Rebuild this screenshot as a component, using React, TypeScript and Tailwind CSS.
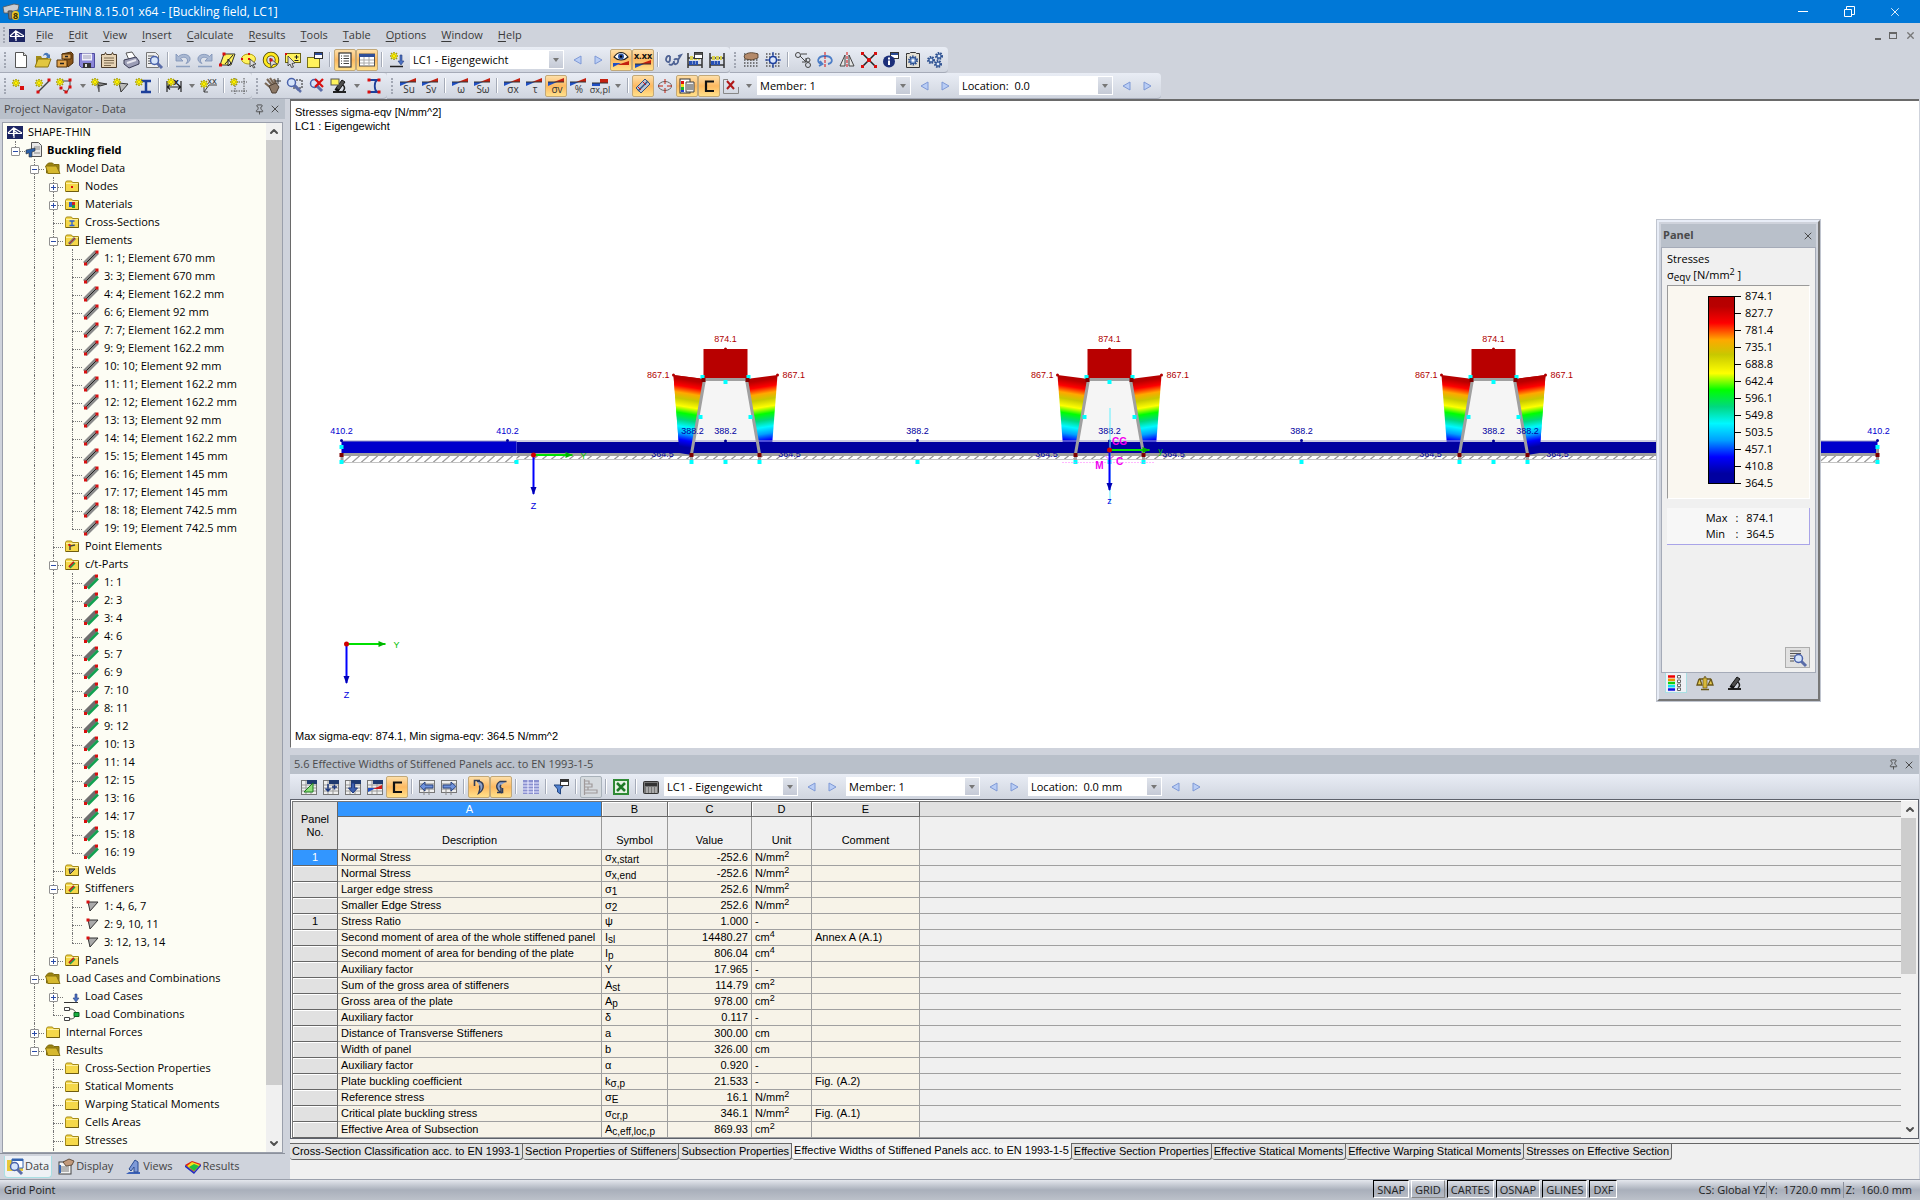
import React from "react";
import { ChevronDown, ChevronUp, Pin, X } from "lucide-react";

/* ---------- small drawing parts shared by the icons ---------- */

const Spark = ({ x = 0, y = 0 }: { x?: number; y?: number }) => (
  <g transform={`translate(${x} ${y})`}>
    <path d="M3 -1v8M-1 3h8M0 0l6 6M6 0l-6 6" stroke="#a8a000" strokeWidth="1.6" />
    <path d="M3 0v6M0 3h6M1 1l4 4M5 1l-4 4" stroke="#fff200" strokeWidth="1" />
  </g>
);

const Node = ({ x, y, s = 3 }: { x: number; y: number; s?: number }) => (
  <rect x={x - s / 2} y={y - s / 2} width={s} height={s} fill="#d90f0f" />
);

const Wedge = ({ label }: { label?: string }) => (
  <>
    <path d="M0 4h9L0 8z" fill="#1f4fc4" />
    <path d="M16 0v4H6z" fill="#c4200f" />
    <path d="M0 4h16" stroke="#333" />
    {label && (
      <text x="9" y="15" fontSize="10" textAnchor="middle" fill="#333">
        {label}
      </text>
    )}
  </>
);

const Sheet = ({ color = "#1f3a70" }: { color?: string }) => (
  <>
    <rect x=".5" y="1.5" width="15" height="14" fill="#eee" stroke="#777" />
    <path d="M1 6h14M1 9h14M1 12h14M5 2v13M10 2v13" stroke="#999" />
    <rect x="6" y="1" width="10" height="4" fill={color} />
  </>
);

const Lens = ({ x = 0, y = 0 }: { x?: number; y?: number }) => (
  <g transform={`translate(${x} ${y})`}>
    <path d="M8 8l5 5" stroke="#5b6da8" strokeWidth="3" />
    <circle cx="5.500" cy="5.500" r="4" fill="#d5e4fa" stroke="#4a62ab" strokeWidth="1.500" />
  </g>
);

const DotGrid = () => (
  <path
    d="M1 2h15M1 5h15M1 8h15M1 11h15M1 14h15"
    stroke="#555"
    strokeDasharray="1.500 1.500"
    strokeWidth="1.500"
  />
);

const Gear = ({ x, y, r }: { x: number; y: number; r: number }) => (
  <g>
    <circle cx={x} cy={y} r={r} fill="none" stroke="#2c4f8f" strokeWidth="2" strokeDasharray="1.500 1" />
    <circle cx={x} cy={y} r={r - 0.8} fill="#7f9fd0" stroke="#2c4f8f" />
    <circle cx={x} cy={y} r={r / 3} fill="#fff" />
  </g>
);

const Abacus = () => (
  <>
    <path d="M1 1v15M15 1v15M1 6h14M1 13h14" stroke="#333" strokeWidth="1.500" />
    <path d="M3 6h10" stroke="#d8cf50" strokeWidth="4" strokeDasharray="3 1" />
    <path d="M2 11h9" stroke="#2650b5" strokeWidth="4" strokeDasharray="3 .5" />
  </>
);

const FolderShape = ({ open = false }: { open?: boolean }) =>
  open ? (
    <>
      <path d="M1.500 13V5l2-2h4l1.500 1.500h5V13z" fill="#9c8410" stroke="#7d690d" />
      <path d="M.5 6h11l3.500 7.500H3z" fill="#d6b82e" stroke="#8a7414" />
    </>
  ) : (
    <>
      <path d="M1.500 13.500v-9l1-1.500h5l1 1.500h6v9z" fill="#f5d84a" stroke="#a58a1a" />
      <path d="M2 5.500h12" stroke="#fdf0a0" />
      <path d="M2 13.500h12.500v-8" stroke="#6f5c10" fill="none" />
    </>
  );

const Bridge = () => (
  <>
    <rect width="16" height="13" y="2" fill="#1c2563" />
    <path d="M1 9.500h14M7 4v10M1 9l5.500-5v8M7 4l8 5M7 6.500l4 3" stroke="#fff" strokeWidth="1.200" fill="none" />
  </>
);

const Section = () => (
  <path d="M13 3.500H5v9.500h8" fill="none" stroke="#111" strokeWidth="2.200" />
);

const Microscope = () => (
  <>
    <path d="M2 15h13v-2H2z" fill="#222" />
    <path d="M5 10l6-8 3 2-6 8z" fill="#4d4d4d" stroke="#111" />
    <path d="M12 7c2 2 2 4 0 6" stroke="#222" strokeWidth="1.500" fill="none" />
    <path d="M4 11l4 2" stroke="#111" strokeWidth="2" />
  </>
);

const Arrow = ({ flip = false }: { flip?: boolean }) => (
  <path
    d={flip ? "M12 4v8L5 8z" : "M4 4v8l7-4z"}
    fill="#b9cdf5"
    stroke="#7f99d6"
  />
);

const ICONS: Record<string, React.ReactNode> = {
  bridge: <Bridge />,
  app: (
    <>
      <path d="M0 3l11-3 5 1-1 5-4 1H6v2H1z" fill="#c9ccd2" stroke="#555" strokeWidth=".8" />
      <path d="M5 7h4v8H6z" fill="#70757f" stroke="#444" strokeWidth=".8" />
      <rect x="9" y="7" width="7" height="9" rx="3" fill="#e6c52c" />
      <text x="12.500" y="14.500" fontSize="9" fontWeight="bold" textAnchor="middle" fill="#3a3000">8</text>
    </>
  ),
  new: (
    <>
      <path d="M2.500 .5h8l3 3v12h-11z" fill="#fff" stroke="#555" />
      <path d="M10.500 .5v3h3" fill="#ddd" stroke="#555" />
    </>
  ),
  open: (
    <>
      <path d="M1 14V4h5l1 2h6v8z" fill="#a18b16" />
      <path d="M3 7h13l-3 8H0z" fill="#e2c73f" stroke="#8a7414" />
      <path d="M8 4c1-4 5-4 6-1l1-1v4h-4l1-1.500c-1-2-2-2-4-.5z" fill="#4778b8" />
    </>
  ),
  drawer: (
    <>
      <path d="M5 2l9-2 2 2v9l-5 4z" fill="#8a5518" stroke="#4d2d08" />
      <path d="M5 2h9v5H5z" fill="#dba255" stroke="#4d2d08" />
      <path d="M0 8h10v7H0z" fill="#e3a54d" stroke="#4d2d08" />
      <path d="M3 11.500h4M8 4.500h3" stroke="#222" strokeWidth="1.500" />
    </>
  ),
  save: (
    <>
      <path d="M.5 1.500h15v14h-13l-2-2z" fill="#8a86d8" stroke="#4e4a9c" />
      <rect x="3" y="1.500" width="10" height="7" fill="#f0f0fa" />
      <path d="M4 4h8M4 6h8" stroke="#9c9cb5" />
      <rect x="4" y="11" width="8" height="5" fill="#333" />
      <rect x="6" y="12" width="2" height="3" fill="#ddd" />
    </>
  ),
  report: (
    <>
      <path d="M.5 4.500v-2h3l1-2 1 2h5l1-2 1 2h3v13H.5z" fill="#e6d3b5" stroke="#4b3b2a" />
      <path d="M3 6h10M3 8.500h10M3 11h10M3 13.500h7" stroke="#7d6a50" />
    </>
  ),
  print: (
    <>
      <path d="M3 1l6-1 4 6-7 2z" fill="#fff" stroke="#555" />
      <path d="M1 8l12-3 3 4v3l-10 4-5-4z" fill="#9b9db5" stroke="#3a3c55" />
      <path d="M4 11l9-3" stroke="#e8e8f0" strokeWidth="2" />
    </>
  ),
  preview: (
    <>
      <path d="M1.500 .5h9l3 3v12h-12z" fill="#eee" stroke="#777" />
      <path d="M3 4h6M3 6.500h4M3 9h3M3 11.500h4" stroke="#666" />
      <Lens x={4} y={3} />
    </>
  ),
  undo: (
    <>
      <path d="M1 2v7h7L5.500 6.500C8 4.500 12 5 12.500 8c.2 1.500-.5 2.500-1.500 3.500 3-1 4.500-3 4-5.500C14 2 7 1 3.500 4.500z" fill="#a9b8d2" stroke="#7b8fb5" strokeWidth=".8" />
      <path d="M1 14.500h14" stroke="#8da0c0" strokeWidth="1.500" />
    </>
  ),
  redo: (
    <>
      <path d="M15 2v7H8l2.500-2.500C8 4.500 4 5 3.500 8c-.2 1.500.5 2.500 1.500 3.500-3-1-4.500-3-4-5.500C2 2 9 1 12.500 4.500z" fill="#a9b8d2" stroke="#7b8fb5" strokeWidth=".8" />
      <path d="M1 14.500h14" stroke="#8da0c0" strokeWidth="1.500" />
    </>
  ),
  selRhomb: (
    <>
      <path d="M5 2h11l-4 11H1z" fill="#fff35c" stroke="#333" />
      <path d="M6 12l8-9M9 7v7l3-3z" stroke="#222" fill="#ddd" />
      <Node x={5} y={2} /> <Node x={1.5} y={13} />
    </>
  ),
  selEllipse: (
    <>
      <ellipse cx="7.500" cy="7" rx="7" ry="5" fill="#fff35c" stroke="#b09b10" />
      <path d="M9 7l6 5-3 .5 2 3-1.500.5-1.500-3-2 2z" fill="#ddd" stroke="#333" strokeWidth=".8" />
      <Node x={8} y={2} s={2} /> <Node x={1} y={7} s={2} /> <Node x={8} y={7} s={2} />
    </>
  ),
  selRing: (
    <>
      <circle cx="8" cy="8" r="6" fill="none" stroke="#4d4400" strokeWidth="4.500" />
      <circle cx="8" cy="8" r="6" fill="none" stroke="#ffe920" strokeWidth="2.800" />
      <path d="M7 6l7 6-4 .5-2 3z" fill="#ddd" stroke="#333" strokeWidth=".8" />
      <Node x={8} y={8} s={3} />
    </>
  ),
  selPlus: (
    <>
      <rect x=".5" y="1.500" width="15" height="9" fill="#fff35c" stroke="#6b6310" />
      <path d="M9.500 5h4M11.500 3v4M9.500 8.500h4" stroke="#222" />
      <path d="M3 4l7 7-3 .5 1.500 3.500-2 .5L5 12l-2 2z" fill="#ddd" stroke="#333" strokeWidth=".8" />
      <Node x={1} y={2} s={2} />
    </>
  ),
  selWin: (
    <>
      <rect x=".5" y="5.500" width="12" height="10" fill="#fff35c" stroke="#77701a" />
      <rect x="7.500" y=".5" width="8" height="6" fill="#fff" stroke="#333" />
      <rect x="8" y="1" width="7" height="2" fill="#2b4b95" />
    </>
  ),
  listView: (
    <>
      <rect x="2" y="1" width="12" height="14" fill="#fff" stroke="#333" strokeWidth="1.200" />
      <path d="M4 4h1M4 6.500h1M4 9h1M4 11.500h1M6.500 4H12M6.500 6.500H12M6.500 9H12M6.500 11.500H12" stroke="#444" />
    </>
  ),
  tableView: (
    <>
      <rect x=".5" y="2" width="15" height="12" fill="#fff" stroke="#555" />
      <rect x="0" y="2" width="16" height="3" fill="#2f4f98" />
      <path d="M1 8h14M1 11h14M5 5v9M10 5v9" stroke="#aaa" />
    </>
  ),
  newLoad: (
    <>
      <path d="M1 14.500h13" stroke="#222" strokeWidth="1.500" />
      <path d="M11 3v6h-2l3 4 3-4h-2V3z" fill="#4a6fc0" stroke="#28427f" strokeWidth=".6" />
      <Spark x={2} y={1} />
    </>
  ),
  prev: <Arrow flip />,
  next: <Arrow />,
  eye: (
    <>
      <path d="M0 11h8l-8 4z" fill="#1f4fc4" />
      <path d="M16 9v4H4z" fill="#c4200f" />
      <path d="M1 5c4-6 10-6 14 0-4 4-10 4-14 0z" fill="#fff" stroke="#222" strokeWidth="1.200" />
      <circle cx="8" cy="4.500" r="3" fill="#2e55a5" />
      <circle cx="8" cy="4.500" r="1.200" fill="#000" />
    </>
  ),
  xxx: (
    <>
      <text x="8" y="6.500" fontSize="9" fontWeight="bold" textAnchor="middle" fill="#111">x.xx</text>
      <path d="M0 12h9l-9 4z" fill="#1f4fc4" />
      <path d="M16 8v4H5z" fill="#c4200f" />
      <path d="M0 12h16" stroke="#333" />
    </>
  ),
  glasses: (
    <path d="M5 4c-3-1-4 2-4 4 1 3 4 3 4-1V4M4 12c2 2 5 0 5-3M9 8c2-2 5-1 4 2s-4 3-4 0M13 8l3-5-3 1" fill="none" stroke="#4f6394" strokeWidth="1.800" />
  ),
  abacusWin: (
    <>
      <Abacus />
      <rect x="7.500" y=".5" width="8" height="6" fill="#fff" stroke="#333" />
      <rect x="8" y="1" width="7" height="2" fill="#555" />
    </>
  ),
  abacus: <Abacus />,
  gridHand: (
    <>
      <DotGrid />
      <path d="M1 4c3-4 8-4 14-2v4L9 8 2 7z" fill="#b48a6a" stroke="#4d3826" strokeWidth=".8" />
    </>
  ),
  gridOrigin: (
    <>
      <DotGrid />
      <path d="M8 0v16M0 8h16" stroke="#1c3fa0" strokeWidth="1.200" />
      <circle cx="8" cy="8" r="3.500" fill="#dbe6fa" stroke="#1c3fa0" strokeWidth="1.500" />
    </>
  ),
  copyMove: (
    <>
      <circle cx="3" cy="3" r="2.500" fill="none" stroke="#444" />
      <path d="M5 4l6 6M11 6v4H7M6 2h6" fill="none" stroke="#444" />
      <circle cx="13" cy="8" r="2" fill="none" stroke="#444" />
      <circle cx="13" cy="13" r="2.500" fill="none" stroke="#444" />
    </>
  ),
  rotate: (
    <>
      <path d="M5 12C-1 11 0 4 8 4s9 7 3 8M3 9l2.500 3L2 14" fill="none" stroke="#4d7ec7" strokeWidth="1.800" />
      <path d="M8 0v16" stroke="#d90f0f" strokeDasharray="3 1" />
    </>
  ),
  mirror: (
    <>
      <path d="M6 3v11H1zM10 3v11h5z" fill="#e6e6e6" stroke="#444" />
      <path d="M8 0v16" stroke="#d90f0f" strokeDasharray="3 1" />
    </>
  ),
  cross: (
    <>
      <path d="M2 2l12 12M14 2L2 14" stroke="#222" strokeWidth="1.500" />
      <Node x={1.5} y={1.5} /> <Node x={14.5} y={1.5} /> <Node x={1.5} y={14.5} /> <Node x={14.5} y={14.5} />
      <Node x={8} y={8} s={4} />
    </>
  ),
  info: (
    <>
      <rect x="7.500" y=".5" width="8" height="6" fill="#fff" stroke="#333" />
      <rect x="8" y="1" width="7" height="2" fill="#2b4b95" />
      <circle cx="6" cy="9.500" r="6" fill="#1c2f7a" />
      <path d="M6 8.500V13M6 5.500v2" stroke="#fff" strokeWidth="2" />
    </>
  ),
  gearSheet: (
    <>
      <path d="M1.500 3.500v-2h3l1-1h5l1 1h3v14h-13z" fill="#e4e0d4" stroke="#333" />
      <Gear x={8} y={8.500} r={4} />
    </>
  ),
  gears: (
    <>
      <Gear x={4} y={8} r={3} />
      <Gear x={12} y={4} r={3} />
      <Gear x={11} y={12} r={3} />
    </>
  ),
  newNode: (
    <>
      <Spark x={0} y={2} />
      <Node x={9} y={10} s={4} />
    </>
  ),
  newLine: (
    <>
      <path d="M3 14L14 3" stroke="#444" strokeWidth="1.500" />
      <Node x={14} y={2} /> <Node x={3} y={14} />
      <Spark x={1} y={2} />
    </>
  ),
  newPoly: (
    <>
      <path d="M3 3h10v5l-3 6-4-2" fill="none" stroke="#444" />
      <Node x={13} y={2} /> <Node x={13} y={9} /> <Node x={9} y={14} /> <Node x={4} y={10} />
      <Spark x={0} y={1} />
    </>
  ),
  newStiff: (
    <>
      <path d="M3 4l12 2-7 2zM3 4l4 4v6" fill="#888" stroke="#333" />
      <Spark x={0} y={1} />
    </>
  ),
  newWeld: (
    <>
      <path d="M5 5l9 1-7 8z" fill="#bbb" stroke="#333" />
      <Spark x={0} y={1} />
    </>
  ),
  newSection: (
    <>
      <path d="M5 3h10M5 14h10M10 3v11" stroke="#1c3f9a" strokeWidth="2.500" />
      <Spark x={0} y={1} />
    </>
  ),
  dim: (
    <>
      <path d="M1 3v11M15 3v11M1 9h14M4 6.500L1.500 9 4 11.500M12 6.500L14.500 9 12 11.500" fill="none" stroke="#222" strokeWidth="1.200" />
      <text x="10" y="7" fontSize="9" fontWeight="bold" textAnchor="middle" fill="#222">x</text>
      <Spark x={2} y={1} />
    </>
  ),
  comment: (
    <>
      <path d="M3 14l5-7h8M3 10v4h4" fill="none" stroke="#444" />
      <text x="11" y="6" fontSize="9" textAnchor="middle" fill="#222">xx</text>
      <Spark x={0} y={3} />
    </>
  ),
  frame: (
    <>
      <path d="M4 0v16M0 13h16M13 0v16M0 4h16" stroke="#555" strokeDasharray="1.500 1" />
      <Spark x={0} y={1} />
    </>
  ),
  panHand: (
    <>
      <path d="M2 1l5 6M5 0l4 6M9 1l2 5M0 5l6 5" stroke="#7a6856" strokeWidth="2.200" />
      <path d="M4 8l7-3 3 4-3 6H7z" fill="#8c7866" stroke="#4d3f33" />
      <path d="M13 0v6M10 3h6" stroke="#333" />
    </>
  ),
  zoomWin: (
    <>
      <rect x="6" y="2" width="9" height="8" fill="none" stroke="#222" strokeDasharray="2 1" />
      <Lens x={-1} y={-1} />
      <path d="M8 8l6 6" stroke="#5b6da8" strokeWidth="2.500" />
    </>
  ),
  zoomDel: (
    <>
      <Lens />
      <path d="M6 1l8 8M14 1L6 9" stroke="#d90f0f" strokeWidth="2.200" />
    </>
  ),
  viewScope: (
    <>
      <Microscope />
      <rect x="0" y="1" width="8" height="6" fill="#fff35c" stroke="#555" />
    </>
  ),
  sectionRed: (
    <>
      <path d="M3 2h10M3 14h10M11 2c-3 2-3 10 0 12" fill="none" stroke="#1c3f9a" strokeWidth="1.800" />
      <Node x={3} y={2} /> <Node x={13} y={2} /> <Node x={3} y={14} /> <Node x={13} y={14} />
    </>
  ),
  su: <Wedge label="Su" />,
  sv: <Wedge label="Sv" />,
  omega: <Wedge label="ω" />,
  somega: <Wedge label="Sω" />,
  sigx: <Wedge label="σx" />,
  tau: <Wedge label="τ" />,
  sigv: <Wedge label="σv" />,
  percent: <Wedge label="%" />,
  sigpl: (
    <>
      <path d="M0 5h8v3H0z" fill="#1f4fc4" />
      <path d="M8 1h8v4H8z" fill="#c4200f" />
      <path d="M0 5h16" stroke="#333" />
      <text x="8" y="15" fontSize="9" textAnchor="middle" fill="#333">σx,pl</text>
    </>
  ),
  member: (
    <>
      <path d="M1 10l9-9 5 5-9 9z" fill="#b9c3d4" stroke="#31507f" />
      <path d="M3 13l10-10" stroke="#31507f" strokeWidth="1.500" />
      <path d="M3 9l3 3M8 4l3 3" stroke="#d90f0f" />
    </>
  ),
  ellipse: (
    <>
      <ellipse cx="8" cy="8" rx="6.500" ry="4.500" fill="none" stroke="#666" />
      <path d="M8 1v5M8 10v5M1 8h5M10 8h5" stroke="#c4200f" />
    </>
  ),
  legend: (
    <>
      <rect x="1" y="1" width="10" height="14" fill="#fff" stroke="#333" />
      <rect x="2" y="3" width="3" height="3" fill="#e01010" />
      <rect x="2" y="6" width="3" height="3" fill="#f5e020" />
      <rect x="2" y="9" width="3" height="3" fill="#18b030" />
      <rect x="2" y="12" width="3" height="2" fill="#2040d0" />
      <path d="M7 4h8v10H7z" fill="#eee" stroke="#444" />
      <path d="M8 7h6M8 9h6M8 11h6" stroke="#444" />
    </>
  ),
  section: <Section />,
  excludeRed: (
    <>
      <path d="M5 1.500H.5v14h15V9" fill="none" stroke="#888" />
      <path d="M4 3l7 8M11 3l-7 8" stroke="#b01818" strokeWidth="2" />
    </>
  ),
  folder: <FolderShape />,
  folderOpen: <FolderShape open />,
  folderNode: (
    <>
      <FolderShape />
      <Node x={8} y={9} s={2} />
    </>
  ),
  folderMat: (
    <>
      <FolderShape />
      <rect x="5" y="6" width="3" height="5" fill="#2a5fd0" />
      <rect x="8" y="6" width="3" height="3" fill="#d02020" />
      <rect x="8" y="9" width="3" height="3" fill="#18a040" />
    </>
  ),
  folderSec: (
    <>
      <FolderShape />
      <path d="M5.500 7h5M5.500 11.500h5M8 7v4.500" stroke="#2a5fd0" strokeWidth="1.300" />
    </>
  ),
  folderElem: (
    <>
      <FolderShape />
      <path d="M5 12l6-6" stroke="#777" strokeWidth="3" />
      <path d="M5 12l6-6" stroke="#c02020" />
    </>
  ),
  folderPt: (
    <>
      <FolderShape />
      <path d="M6 12V8l5-1M6 8L5 6" stroke="#444" strokeWidth="1.500" fill="none" />
      <Node x={5.5} y={7} s={2} />
    </>
  ),
  folderCt: (
    <>
      <FolderShape />
      <path d="M5 11l5-5" stroke="#c02020" strokeWidth="2" />
      <path d="M6 12l5-5" stroke="#18a050" strokeWidth="1.500" />
    </>
  ),
  folderWeld: (
    <>
      <FolderShape />
      <path d="M5 7h6l-5 5z" fill="#888" stroke="#333" />
    </>
  ),
  model: (
    <>
      <path d="M5.500 .5h7l3 3v11h-10z" fill="#e8e8e8" stroke="#555" />
      <path d="M8 5h6M8 7h6M8 11h6" stroke="#888" />
      <path d="M0 8l9-2v3l-3 1v5H3v-4l-3 1z" fill="#2a5fa8" stroke="#333" strokeWidth=".6" />
    </>
  ),
  element: (
    <>
      <path d="M2 14L14 2" stroke="#8a8a8a" strokeWidth="5.500" />
      <path d="M2 14L14 2" stroke="#222" strokeWidth="1" />
      <Node x={14} y={2} /> <Node x={2.5} y={14} />
    </>
  ),
  ctPart: (
    <>
      <path d="M2 13L13 2" stroke="#6e6e6e" strokeWidth="4.500" />
      <path d="M5 14.500L15 4.500" stroke="#12a050" strokeWidth="2.500" />
      <Node x={13.5} y={2} /> <Node x={2.5} y={13.5} />
    </>
  ),
  stiffener: (
    <>
      <path d="M5 4h10l-8 9z" fill="#aaa" stroke="#333" />
      <Node x={5} y={4} />
    </>
  ),
  loadCase: (
    <>
      <path d="M0 14.500h14" stroke="#333" />
      <path d="M11 6v4H9l3 4 3-4h-2V6z" fill="#4a6fc0" stroke="#28427f" strokeWidth=".6" />
    </>
  ),
  loadComb: (
    <>
      <path d="M.5 1.500h5v3h-5zM.5 11.500h5v3h-5z" fill="#fff" stroke="#444" />
      <path d="M6 3c4 0 5 2 6 4M6 13c4 0 5-2 6-4" fill="none" stroke="#444" />
      <path d="M10 6.500h5v4h-5z" fill="#18b040" stroke="#0c6020" />
    </>
  ),
  tabData: (
    <>
      <path d="M0 2h6l1 1h9v10H0z" fill="#e8c838" />
      <path d="M5 1h11v9H5z" fill="#fff" stroke="#3564b0" />
      <path d="M5 1h11v2H5z" fill="#3564b0" />
      <Lens x={2} y={3} />
    </>
  ),
  tabDisplay: (
    <>
      <rect x="1" y="3" width="12" height="12" fill="#f4f4f4" stroke="#444" />
      <path d="M3 8h8M3 10h8M3 12h8" stroke="#777" />
      <path d="M1 6h2v8H1z" fill="#3564b0" />
      <path d="M5 3l6-3 5 2-2 4-6 1z" fill="#c29a7c" stroke="#4d3826" strokeWidth=".8" />
    </>
  ),
  tabViews: (
    <>
      <path d="M1 15h14v-2H4z" fill="#3c62b8" />
      <path d="M4 10l6-9 3 2v10H9V8l-3 4z" fill="#7e9ad8" stroke="#2c4d94" />
    </>
  ),
  tabResults: (
    <>
      <path d="M0 6l7-4 9 3-7 8z" fill="#e02010" />
      <path d="M2 7l5-4 8 3-6 6z" fill="#f5e020" />
      <path d="M4 8l5-3 5 2-5 5z" fill="#20c040" />
      <path d="M0 6l9 7v2L0 8zM9 13l7-8v2l-7 8z" fill="#2030c0" />
    </>
  ),
  colors: (
    <>
      <path d="M0 1.500h7" stroke="#f00000" strokeWidth="2.500" />
      <path d="M0 4.800h7" stroke="#f09000" strokeWidth="2.500" />
      <path d="M0 8h7" stroke="#10d010" strokeWidth="2.500" />
      <path d="M0 11.200h7" stroke="#10e0f0" strokeWidth="2.500" />
      <path d="M0 14.500h7" stroke="#1010e0" strokeWidth="2.500" />
      <path d="M9.500 .5h3v2.500h-3zM9.500 5h3v2.500h-3zM9.500 9h3v2.500h-3zM9.500 13h3v2.500h-3z" fill="#fff" stroke="#666" />
    </>
  ),
  balance: (
    <>
      <path d="M8 1v12M2 4h12M4 14.500h8M2 4l-2 6h5L3 4M14 4l-3 6h5l-2-6" stroke="#6a5718" strokeWidth="1.300" fill="#e8cc50" />
      <path d="M6 3h4v10H6z" fill="#d8b838" stroke="#6a5718" strokeWidth=".7" />
    </>
  ),
  scope: <Microscope />,
  listZoom: (
    <>
      <path d="M0 1h11M0 3.500h11M0 6h5M0 8.500h4M0 11h4" stroke="#555" />
      <Lens x={3} y={3} />
    </>
  ),
  sheetGreen: (
    <>
      <Sheet />
      <path d="M3 13L12 4v9z" fill="#8ee07a" stroke="#1e7a20" />
    </>
  ),
  sheetPlus: (
    <>
      <Sheet />
      <path d="M5 5v7M2.500 9.500L5 12l2.500-2.500M9 8h5M11.500 5.500v5" stroke="#1f3a80" strokeWidth="1.500" fill="none" />
    </>
  ),
  sheetDown: (
    <>
      <Sheet />
      <path d="M6.500 4h3v5h3L8 14 3.500 9h3z" fill="#3c5fae" stroke="#1f3a80" />
    </>
  ),
  sheetWedge: (
    <>
      <Sheet />
      <path d="M1 9h8l-8 4z" fill="#1f4fc4" />
      <path d="M15 6v4H6z" fill="#d01818" />
    </>
  ),
  colLeft: (
    <>
      <rect x=".5" y="1.500" width="15" height="12" fill="#eee" stroke="#777" />
      <path d="M1 5h14M1 10h14M5 10v6M10 10v6" stroke="#888" />
      <path d="M1 7.500L6 3v3h8v3H6v3z" fill="#6f92dc" stroke="#28427f" />
    </>
  ),
  colRight: (
    <>
      <rect x=".5" y="1.500" width="15" height="12" fill="#eee" stroke="#777" />
      <path d="M1 5h14M1 10h14M5 10v6M10 10v6" stroke="#888" />
      <path d="M15 7.500L10 3v3H2v3h8v3z" fill="#6f92dc" stroke="#28427f" />
    </>
  ),
  hookRight: (
    <>
      <path d="M6 2.500c8-1 8 8 1.500 12 1-3 2-5 1-8" fill="#8fa3cc" stroke="#2f3b58" strokeWidth="1.400" />
      <path d="M9 1.500H3.500v5.500" fill="none" stroke="#2f3b58" strokeWidth="1.600" />
    </>
  ),
  hookLeft: (
    <>
      <path d="M13.500 2.500H7c-5 3-4 8 1 11V9c-1-1-1-2 0-3" fill="#8fa3cc" stroke="#2f3b58" strokeWidth="1.400" />
      <path d="M4 13.500h5.500V9" fill="none" stroke="#2f3b58" strokeWidth="1.600" />
    </>
  ),
  rows: (
    <>
      <rect x="0" y="1" width="16" height="14" fill="#8a90d0" />
      <path d="M0 4h16M0 7h16M0 10h16M0 13h16M5 1v14M10.500 1v14" stroke="#eef" />
    </>
  ),
  filter: (
    <>
      <path d="M1 6h10L7.500 10v5l-3-2v-3z" fill="#4f80d0" stroke="#23457f" />
      <rect x="7.500" y=".5" width="8" height="6" fill="#fff" stroke="#333" />
      <rect x="8" y="1" width="7" height="2" fill="#333" />
    </>
  ),
  steps: (
    <path d="M1.500 0v16M2 2h4v3h3v3H5v3h9v3H2M2 5h4M5 8H2M5 11H2" fill="none" stroke="#a09a9a" strokeWidth="1.200" />
  ),
  excel: (
    <>
      <rect x="0" y="0" width="16" height="16" fill="#2f8a35" />
      <rect x="2" y="2" width="12" height="12" fill="#e6f2e4" />
      <path d="M4 4l8 8M12 4l-8 8" stroke="#1f7a28" strokeWidth="2.500" />
    </>
  ),
  calc: (
    <>
      <rect x=".5" y="2.500" width="15" height="12" rx="1" fill="#777" stroke="#333" />
      <rect x="2" y="4" width="12" height="3" fill="#333" />
      <path d="M3 9h11M3 11h11M3 13h11" stroke="#ddd" strokeDasharray="2 1" />
    </>
  ),
};

const Icon = ({ name }: { name: string }) => (
  <svg viewBox="0 0 16 16" className="h-4 w-4 shrink-0 overflow-visible" aria-hidden="true">
    {ICONS[name]}
  </svg>
);

/* ---------- toolbars ---------- */

type Item =
  | string
  | { on: string }
  | { off: string }
  | { combo: string; value: string };

const fileBar: Item[] = [
  "new", "open", "drawer", "save", "report", "print", "preview", "|",
  "undo", "redo", "selRhomb", "selEllipse", "selRing", "selPlus", "selWin", "|",
  { on: "listView" }, { on: "tableView" }, "|", "newLoad",
  { combo: "Load case", value: "LC1 - Eigengewicht" }, "prev", "next",
  { on: "eye" }, { on: "xxx" }, "|", "glasses", "abacusWin", "abacus",
];
const gridBar: Item[] = [
  "gridHand", "gridOrigin", "|", "copyMove", "rotate", "mirror", "cross", "info", "gearSheet", "gears",
];
const insertBar: Item[] = [
  "newNode", "newLine", "newPoly", "v", "newStiff", "newWeld", "newSection", "|", "dim", "v", "comment", "|", "frame",
];
const zoomBar: Item[] = ["panHand", "zoomWin", "zoomDel", "viewScope", "v", "sectionRed"];
const resultBar: Item[] = [
  "su", "sv", "|", "omega", "somega", "|", "sigx", "tau", { on: "sigv" }, "percent", "sigpl", "v", "|",
  { on: "member" }, "ellipse", { on: "legend" }, { on: "section" }, "excludeRed", "v",
  { combo: "Member", value: "Member: 1" }, "prev", "next",
  { combo: "Location", value: "Location:  0.0" }, "prev", "next",
];
const tableBar: Item[] = [
  "sheetGreen", "sheetPlus", "sheetDown", "sheetWedge", { on: "section" }, "|", "colLeft", "colRight", "|",
  { on: "hookRight" }, { on: "hookLeft" }, "|", "rows", "|", "filter", "|", { off: "steps" }, "|", "excel", "|", "calc",
  { combo: "Table load case", value: "LC1 - Eigengewicht" }, "prev", "next",
  { combo: "Table member", value: "Member: 1" }, "prev", "next",
  { combo: "Table location", value: "Location:  0.0 mm" }, "prev", "next",
];

function Tools({ items, comboClass }: { items: Item[]; comboClass: string }) {
  return (
    <>
      {items.map((item, i) => {
        if (item === "|") {
          return (
            <span key={i} className="flex w-2 justify-center">
              <span className="h-[15px] w-0.5 border-l border-[#a5abb8] bg-white" />
            </span>
          );
        }
        if (item === "v") {
          return (
            <button key={i} aria-label="More" className="flex w-[13px] justify-center">
              <span className="border-x-3 border-t-4 border-x-transparent border-t-[#777]" />
            </button>
          );
        }
        if (typeof item === "string") {
          return (
            <button key={i} aria-label={item} className="flex h-[22px] w-[22px] items-center justify-center">
              <Icon name={item} />
            </button>
          );
        }
        if ("combo" in item) {
          return (
            <label key={i} className={`relative mx-0.5 flex h-[19px] bg-white ${comboClass}`}>
              <select
                aria-label={item.combo}
                className="w-full appearance-none whitespace-pre bg-white pl-[3px] text-[11px] leading-[19px] text-black">
                <option>{item.value.replace("  ", "\u00a0 ")}</option>
              </select>
              <span className="pointer-events-none absolute top-px right-px bottom-px flex w-[14px] items-center justify-center bg-linear-to-b from-[#e0e4ec] to-[#c5cad6]">
                <span className="border-x-3 border-t-4 border-x-transparent border-t-[#777]" />
              </span>
            </label>
          );
        }
        const on = "on" in item;
        return (
          <button
            key={i}
            aria-label={on ? item.on : item.off}
            aria-pressed={on}
            className={
              on
                ? "flex h-[22px] w-[22px] items-center justify-center rounded-xs border border-[#c2a878] bg-linear-to-b from-[#fddfa8] via-[#fdb960] to-[#ffe08a]"
                : "flex h-[22px] w-[22px] items-center justify-center rounded-xs border border-[#a9b2ba] bg-[#d5dade]"
            }>
            <Icon name={on ? item.on : item.off} />
          </button>
        );
      })}
    </>
  );
}

function Toolbar({ items }: { items: Item[] }) {
  return (
    <div className="flex h-[26px] items-center rounded-r-sm border-b border-[#a6abb8] bg-linear-to-b from-[#e9edf5] to-[#d0d5df] pr-0.5">
      <span className="flex w-[10px] justify-center">
        <span className="h-4 border-l-2 border-dotted border-[#a2a7b3]" />
      </span>
      <Tools items={items} comboClass="w-[154px]" />
    </div>
  );
}

const menus = [
  "File", "Edit", "View", "Insert", "Calculate", "Results", "Tools", "Table", "Options", "Window", "Help",
];

/* ---------- navigator tree ---------- */

type TreeNode = { label: string; icon: string; open?: boolean; more?: boolean; bold?: boolean; children?: TreeNode[] };

const leaf = (icon: string) => (label: string): TreeNode => ({ label, icon });

const elements = [
  "1: 1; Element 670 mm", "3: 3; Element 670 mm", "4: 4; Element 162.2 mm", "6: 6; Element 92 mm",
  "7: 7; Element 162.2 mm", "9: 9; Element 162.2 mm", "10: 10; Element 92 mm", "11: 11; Element 162.2 mm",
  "12: 12; Element 162.2 mm", "13: 13; Element 92 mm", "14: 14; Element 162.2 mm", "15: 15; Element 145 mm",
  "16: 16; Element 145 mm", "17: 17; Element 145 mm", "18: 18; Element 742.5 mm", "19: 19; Element 742.5 mm",
];
const ctParts = [
  "1: 1", "2: 3", "3: 4", "4: 6", "5: 7", "6: 9", "7: 10", "8: 11",
  "9: 12", "10: 13", "11: 14", "12: 15", "13: 16", "14: 17", "15: 18", "16: 19",
];

const tree: TreeNode = {
  label: "Buckling field",
  icon: "model",
  open: true,
  bold: true,
  children: [
    {
      label: "Model Data",
      icon: "folderOpen",
      open: true,
      children: [
        { label: "Nodes", icon: "folderNode", open: false },
        { label: "Materials", icon: "folderMat", open: false },
        { label: "Cross-Sections", icon: "folderSec" },
        { label: "Elements", icon: "folderElem", open: true, children: elements.map(leaf("element")) },
        { label: "Point Elements", icon: "folderPt" },
        { label: "c/t-Parts", icon: "folderCt", open: true, children: ctParts.map(leaf("ctPart")) },
        { label: "Welds", icon: "folderWeld" },
        {
          label: "Stiffeners",
          icon: "folderCt",
          open: true,
          children: ["1: 4, 6, 7", "2: 9, 10, 11", "3: 12, 13, 14"].map(leaf("stiffener")),
        },
        { label: "Panels", icon: "folderCt", open: false },
      ],
    },
    {
      label: "Load Cases and Combinations",
      icon: "folderOpen",
      open: true,
      children: [
        { label: "Load Cases", icon: "loadCase", open: false },
        { label: "Load Combinations", icon: "loadComb" },
      ],
    },
    { label: "Internal Forces", icon: "folder", open: false },
    {
      label: "Results",
      icon: "folderOpen",
      open: true,
      more: true,
      children: [
        "Cross-Section Properties", "Statical Moments", "Warping Statical Moments", "Cells Areas", "Stresses", "",
      ].map(leaf("folder")),
    },
  ],
};

function TreeRow({ node, trail, last }: { node: TreeNode; trail: boolean[]; last: boolean }) {
  const kids = node.children ?? [];
  return (
    <li>
      <div className="flex h-[18px] items-center whitespace-nowrap">
        {trail.map((line, i) => (
          <span key={i} className="flex h-full w-[19px] shrink-0 pl-[9px]">
            {line && <span className="border-l border-dotted border-[#777]" />}
          </span>
        ))}
        <span className="relative h-full w-[19px] shrink-0">
          <span
            className={`absolute top-0 left-[9px] border-l border-dotted border-[#777] ${last ? "h-[10px]" : "h-full"}`}
          />
          <span className="absolute top-[10px] right-0 left-[9px] border-t border-dotted border-[#777]" />
          {node.open !== undefined && (
            <button
              aria-label={node.open ? "Collapse" : "Expand"}
              className="absolute top-[6px] left-[5px] h-[9px] w-[9px] rounded-[1px] border border-[#919191] bg-white">
              <span className="absolute top-[3px] right-px left-px h-px bg-[#2a4ba8]" />
              {!node.open && <span className="absolute top-px bottom-px left-[3px] w-px bg-[#2a4ba8]" />}
            </button>
          )}
        </span>
        <span className="w-[22px] shrink-0 pl-px">
          <Icon name={node.icon} />
        </span>
        <span className={node.bold ? "font-bold" : ""}>{node.label}</span>
      </div>
      {kids.length > 0 && (
        <ul>
          {kids.map((kid, i) => (
            <TreeRow
              key={i}
              node={kid}
              trail={[...trail, !last]}
              last={i === kids.length - 1 && !node.more}
            />
          ))}
        </ul>
      )}
    </li>
  );
}

const navTabs = [
  { label: "Data", icon: "tabData" },
  { label: "Display", icon: "tabDisplay" },
  { label: "Views", icon: "tabViews" },
  { label: "Results", icon: "tabResults" },
];

function Navigator() {
  return (
    <aside className="flex w-[285px] shrink-0 flex-col">
      <header className="flex h-5 shrink-0 items-center bg-[#b9c0ca] pr-1 pl-1 text-[#4a4a4a]">
        <h2 className="flex-1">Project Navigator - Data</h2>
        <button aria-label="Pin navigator" className="mr-1">
          <Pin className="h-[11px] w-[11px]" strokeWidth={2} />
        </button>
        <button aria-label="Close navigator">
          <X className="h-3 w-3" />
        </button>
      </header>
      <div className="mx-0.5 mt-[3px] flex min-h-0 flex-1 border border-[#9a9fab] bg-[#fdfdf4] text-black">
        <div className="min-w-0 flex-1 overflow-hidden pl-[3px]">
          <div className="flex h-[18px] items-center">
            <span className="w-[22px] pl-px">
              <Icon name="bridge" />
            </span>
            SHAPE-THIN
          </div>
          <ul>
            <TreeRow node={tree} trail={[]} last />
          </ul>
        </div>
        <div className="flex w-4 flex-col bg-[#f0f0f0] text-[#505050]">
          <ChevronUp className="mx-auto h-[17px] w-3" strokeWidth={4} />
          <div className="flex-1 bg-[#cdcdcd]" />
          <div className="h-[50px]" />
          <ChevronDown className="mx-auto h-[17px] w-3" strokeWidth={4} />
        </div>
      </div>
      <nav className="flex h-[26px] shrink-0 items-center border-t border-[#8c919c] pl-1 text-[#444]">
        {navTabs.map((tab, i) => (
          <button
            key={tab.label}
            className={
              i === 0
                ? "flex h-[22px] items-center gap-0.5 rounded-b-sm border-x border-b border-[#a9dfe3] bg-[#eef1f5] px-0.5"
                : "flex h-[22px] items-center gap-0.5 px-1.5"
            }>
            <Icon name={tab.icon} />
            {tab.label}
          </button>
        ))}
      </nav>
    </aside>
  );
}

/* ---------- stress drawing ---------- */

const stops: [string, string][] = [
  ["0%", "#b40000"], ["5%", "#b80000"], ["14%", "#ff0000"], ["23%", "#ffa800"], ["31%", "#c8c800"],
  ["41%", "#ffff00"], ["50%", "#00ff00"], ["59%", "#00d880"], ["68%", "#00f8ff"], ["77%", "#00a0ff"],
  ["86%", "#0000ff"], ["95%", "#0000a0"], ["100%", "#0000a0"],
];

const Dots = ({ points, fill }: { points: number[][]; fill: string }) => (
  <>
    {points.map(([x, y]) => (
      <rect key={`${x}-${y}`} x={x - 2} y={y - 2} width="4" height="4" fill={fill} />
    ))}
  </>
);

const Axes = ({ x, y, len, names }: { x: number; y: number; len: number; names: [string, string] }) => (
  <g>
    <path d={`M${x} ${y}h${len}`} stroke="#00e000" strokeWidth="2" />
    <path d={`M${x + len} ${y}l-7 -3v6z`} fill="#00b400" />
    <path d={`M${x} ${y}v${len}`} stroke="#0000ff" strokeWidth="2" />
    <path d={`M${x} ${y + len + 1}l-3 -8h6z`} fill="#0000b4" />
    <circle cx={x} cy={y} r="2.500" fill="#d00000" />
    <text x={x + len + 11} y={y + 4} fill="#00c000" textAnchor="middle">{names[0]}</text>
    <text x={x} y={y + 54} fill="#0000e0" textAnchor="middle">{names[1]}</text>
  </g>
);

const Side = ({ mirrored = false }: { mirrored?: boolean }) => (
  <polygon
    points="-52,375 -21,379 -34,455 -46,453"
    fill="url(#stress)"
    transform={mirrored ? "scale(-1 1)" : undefined}
  />
);

const centers = [725, 1109, 1493];

function StressDrawing() {
  return (
    <svg viewBox="291 101 1627 646" className="block h-full w-full" fontSize="9" role="img" aria-label="Stress diagram">
      <defs>
        <linearGradient id="stress" gradientUnits="userSpaceOnUse" x1="-22" y1="379" x2="-34" y2="452">
          {stops.map(([offset, color]) => (
            <stop key={offset} offset={offset} stopColor={color} />
          ))}
        </linearGradient>
        <pattern id="hatchWide" width="9" height="6" patternUnits="userSpaceOnUse" y="456">
          <path d="M1 6l7 -6" stroke="#555" />
        </pattern>
        <pattern id="hatch" width="9" height="3" patternUnits="userSpaceOnUse" y="456">
          <path d="M2 3l4 -3" stroke="#555" />
        </pattern>
      </defs>

      {centers.map((cx) => (
        <g key={cx} transform={`translate(${cx} 0)`}>
          <polygon points="-21,380 21,380 34,455 -34,455" fill="#f5f5f5" />
          <Side />
          <Side mirrored />
          <rect x="-22" y="349" width="44" height="29" fill="#b80000" />
        </g>
      ))}

      <rect x="516" y="442" width="1186" height="11" fill="#0000a0" />
      <rect x="341" y="441" width="175" height="12" fill="#0000cc" />
      <rect x="1702" y="441" width="175" height="12" fill="#0000cc" />
      <path d="M341 441h1536" stroke="#9a9ac0" />
      <rect x="341" y="453" width="1536" height="3" fill="#a0a0a0" />
      <rect x="341" y="456" width="175" height="6" fill="url(#hatchWide)" />
      <rect x="1702" y="456" width="175" height="6" fill="url(#hatchWide)" />
      <rect x="516" y="456" width="1186" height="3" fill="url(#hatch)" />
      <path d="M341 462.500h175M1702 462.500h175M516 459.500h1186" stroke="#c4c4c4" />
      <path d="M341.500 453v10M1877 447v16" stroke="#999" strokeWidth="3" />

      <g transform="translate(725 0)">
        <Side />
      </g>
      <g transform="translate(1493 0)">
        <Side mirrored />
      </g>

      {centers.map((cx) => (
        <g key={cx} transform={`translate(${cx} 0)`}>
          <path d="M-34 462v-8L-21 379.500H21L34 454v8" fill="none" stroke="#a0a0a0" strokeWidth="3" />
          <Dots points={[[-34, 462], [34, 462], [0, 462], [0, 382], [-25, 417], [25, 417], [-23, 377], [23, 377]]} fill="#00ffff" />
          <Dots points={[[-34, 455], [34, 455], [-22, 380], [22, 380]]} fill="#800000" />
          <circle cx="0" cy="349" r="1.500" fill="#b00000" />
          <circle cx="-52" cy="375" r="1.500" fill="#b00000" />
          <circle cx="52" cy="375" r="1.500" fill="#b00000" />
          <circle cx="0" cy="441" r="1.500" fill="#000090" />
          <g fill="#b00000">
            <text x="0" y="342" textAnchor="middle">874.1</text>
            <text x="-56" y="378" textAnchor="end">867.1</text>
            <text x="57" y="378">867.1</text>
          </g>
          <g fill="#0000a0" textAnchor="middle">
            <text x="0" y="434">388.2</text>
            <text x="-63" y="457">364.5</text>
            <text x="64" y="457">364.5</text>
          </g>
        </g>
      ))}

      <g fill="#0000a0" textAnchor="middle">
        <text x="692" y="434">388.2</text>
        <text x="917" y="434">388.2</text>
        <text x="1301" y="434">388.2</text>
        <text x="1527" y="434">388.2</text>
      </g>
      <g fill="#0000d0" textAnchor="middle">
        <text x="341" y="434">410.2</text>
        <text x="507" y="434">410.2</text>
        <text x="1878" y="434">410.2</text>
      </g>
      <Dots points={[[341, 447], [341, 462], [516, 462], [917, 462], [1301, 462], [1877, 447], [1877, 462]]} fill="#00ffff" />
      <Dots points={[[341, 455], [1877, 455]]} fill="#800000" />
      {[341, 507, 917, 1301, 1877].map((x) => (
        <circle key={x} cx={x} cy="440.500" r="1.500" fill="#0000a0" />
      ))}

      <path d="M1109.500 408v96" stroke="#60f0ff" />
      <path d="M1062 462.500h93" stroke="#ff70ff" strokeDasharray="1 2" />
      <path d="M1105 456l4 4 4-4M1109 460v5" stroke="#ff60ff" fill="none" />
      <Axes x={533} y={455} len={39} names={["Y", "Z"]} />
      <Axes x={1109} y={450} len={40} names={["y", "z"]} />
      <Axes x={346} y={644} len={39} names={["Y", "Z"]} />
      <g fill="#f000f0" fontWeight="bold" fontSize="10" textAnchor="middle">
        <text x="1119" y="445">CG</text>
        <text x="1119" y="465">C</text>
        <text x="1099" y="469">M</text>
      </g>
    </svg>
  );
}

const legend = ["874.1", "827.7", "781.4", "735.1", "688.8", "642.4", "596.1", "549.8", "503.5", "457.1", "410.8", "364.5"];

function StressPanel() {
  return (
    <section className="absolute top-[119px] right-[99px] flex h-[481px] w-[163px] flex-col border-2 border-[#e8edf7] border-r-[#777] border-b-[#777] bg-[#cfd3dc] p-0.5 shadow-[0_0_0_1px_#c0c5cf]">
      <header className="flex h-[23px] items-center bg-[#b9c0ca] px-0.5 text-[#4a4a4a]">
        <h2 className="flex-1 font-bold">Panel</h2>
        <button aria-label="Close panel">
          <X className="h-3 w-3" />
        </button>
      </header>
      <div className="flex flex-1 flex-col border border-[#a5abb8] bg-[#f0f0f0] px-[5px] pt-[3px] text-black">
        <p className="leading-4">Stresses</p>
        <p className="leading-4">
          σ<sub className="-bottom-0.5 text-[10px]">eqv</sub> [N/mm<sup className="text-[9px]">2</sup> ]
        </p>
        <div className="mt-0.5 flex h-[214px] justify-center border border-[#9a9a9a] border-r-white border-b-white bg-[#faf7f0] pl-1">
          <div className="mt-[10px] h-[188px] w-[27px] border border-black bg-[linear-gradient(#b40000_0%,#b80000_5%,#ff0000_14%,#ffa800_23%,#c8c800_31%,#ffff00_41%,#00ff00_50%,#00d880_59%,#00f8ff_68%,#00a0ff_77%,#0000ff_86%,#0000a0_95%)]" />
          <ul className="mt-0.5">
            {legend.map((value) => (
              <li key={value} className="flex h-[17px] items-center gap-1">
                <span className="h-px w-1.5 bg-black" />
                {value}
              </li>
            ))}
          </ul>
        </div>
        <dl className="mt-[9px] grid grid-cols-[auto_auto_auto] justify-center gap-x-2 border-r border-b border-[#a9a4e8] bg-[#f7f7f7] py-0.5 pl-1 leading-4">
          <dt>Max</dt>
          <span>:</span>
          <dd>874.1</dd>
          <dt>Min</dt>
          <span>:</span>
          <dd>364.5</dd>
        </dl>
        <button
          aria-label="Panel details"
          className="mt-auto mb-1 flex h-[21px] w-[25px] items-center justify-center self-end border border-[#adadad] bg-[#e1e1e1]">
          <Icon name="listZoom" />
        </button>
      </div>
      <nav className="flex h-6 items-start gap-[7px] pl-1">
        <button aria-label="Colors" className="flex h-5 w-[22px] items-center justify-center border-x border-b border-[#a9dfe3] bg-[#eef1f5]">
          <Icon name="colors" />
        </button>
        <button aria-label="Factors" className="flex h-5 w-[22px] items-center justify-center">
          <Icon name="balance" />
        </button>
        <button aria-label="Filter" className="flex h-5 w-[22px] items-center justify-center">
          <Icon name="scope" />
        </button>
      </nav>
    </section>
  );
}

/* ---------- results table ---------- */

type Row = { no?: string; text: string; sym: string; sub?: string; value: string; unit: string; exp?: string; note?: string };

const rows: Row[] = [
  { no: "1", text: "Normal Stress", sym: "σ", sub: "x,start", value: "-252.6", unit: "N/mm", exp: "2" },
  { text: "Normal Stress", sym: "σ", sub: "x,end", value: "-252.6", unit: "N/mm", exp: "2" },
  { text: "Larger edge stress", sym: "σ", sub: "1", value: "252.6", unit: "N/mm", exp: "2" },
  { text: "Smaller Edge Stress", sym: "σ", sub: "2", value: "252.6", unit: "N/mm", exp: "2" },
  { no: "1", text: "Stress Ratio", sym: "ψ", value: "1.000", unit: "-" },
  { text: "Second moment of area of the whole stiffened panel", sym: "I", sub: "sl", value: "14480.27", unit: "cm", exp: "4", note: "Annex A (A.1)" },
  { text: "Second moment of area for bending of the plate", sym: "I", sub: "p", value: "806.04", unit: "cm", exp: "4" },
  { text: "Auxiliary factor", sym: "Y", value: "17.965", unit: "-" },
  { text: "Sum of the gross area of stiffeners", sym: "A", sub: "st", value: "114.79", unit: "cm", exp: "2" },
  { text: "Gross area of the plate", sym: "A", sub: "p", value: "978.00", unit: "cm", exp: "2" },
  { text: "Auxiliary factor", sym: "δ", value: "0.117", unit: "-" },
  { text: "Distance of Transverse Stiffeners", sym: "a", value: "300.00", unit: "cm" },
  { text: "Width of panel", sym: "b", value: "326.00", unit: "cm" },
  { text: "Auxiliary factor", sym: "α", value: "0.920", unit: "-" },
  { text: "Plate buckling coefficient", sym: "k", sub: "σ,p", value: "21.533", unit: "-", note: "Fig. (A.2)" },
  { text: "Reference stress", sym: "σ", sub: "E", value: "16.1", unit: "N/mm", exp: "2" },
  { text: "Critical plate buckling stress", sym: "σ", sub: "cr,p", value: "346.1", unit: "N/mm", exp: "2", note: "Fig. (A.1)" },
  { text: "Effective Area of Subsection", sym: "A", sub: "c,eff,loc,p", value: "869.93", unit: "cm", exp: "2" },
];

const sheetTabs = [
  "Cross-Section Classification acc. to EN 1993-1",
  "Section Properties of Stiffeners",
  "Subsection Properties",
  "Effective Widths of Stiffened Panels acc. to EN 1993-1-5",
  "Effective Section Properties",
  "Effective Statical Moments",
  "Effective Warping Statical Moments",
  "Stresses on Effective Section",
];

const headCell = "border-r border-b border-[#9a9a9a] bg-[#f0f0f0] pb-0.5 align-bottom font-normal";
const letterCell = "h-[15px] border-r border-b border-[#666] bg-[#e1e1e1] font-normal shadow-[inset_1px_1px_0_#fff]";
const dataCell = "border-r border-b border-[#a0a0a0] bg-[#f7f3e8] px-[3px]";

function ResultTable() {
  return (
    <div className="flex border border-[#5d616b] bg-white pt-px pl-px">
      <table className="w-full table-fixed border-separate border-spacing-0 border-t border-l border-[#777] bg-[#f0f0f0] text-[11px] leading-[13px] text-black">
        <colgroup>
          <col className="w-[45px]" />
          <col className="w-[264px]" />
          <col className="w-[66px]" />
          <col className="w-[84px]" />
          <col className="w-[60px]" />
          <col className="w-[108px]" />
          <col />
        </colgroup>
        <thead>
          <tr>
            <th rowSpan={2} className="border-r border-b border-[#666] bg-[#e1e1e1] font-normal">
              Panel<br />No.
            </th>
            <th className="h-[15px] border-r border-b border-[#666] bg-[#3296ff] font-normal text-white">A</th>
            <th className={letterCell}>B</th>
            <th className={letterCell}>C</th>
            <th className={letterCell}>D</th>
            <th className={letterCell}>E</th>
            <th className="border-b border-[#9a9a9a] bg-[#e1e1e1]" />
          </tr>
          <tr className="h-[33px]">
            <th className={headCell}>Description</th>
            <th className={headCell}>Symbol</th>
            <th className={headCell}>Value</th>
            <th className={headCell}>Unit</th>
            <th className={headCell}>Comment</th>
            <th className="border-b border-[#9a9a9a]" />
          </tr>
        </thead>
        <tbody>
          {rows.map((row, i) => (
            <tr key={i} className="h-4 whitespace-nowrap">
              <th
                className={
                  i === 0
                    ? "border-r border-b border-[#666] bg-[#3296ff] font-normal text-white"
                    : "border-r border-b border-[#666] bg-[#e1e1e1] font-normal shadow-[inset_1px_1px_0_#fff]"
                }>
                {row.no}
              </th>
              <td className={dataCell}>{row.text}</td>
              <td className={dataCell}>
                {row.sym}
                {row.sub && <sub className="-bottom-0.5 text-[10px]">{row.sub}</sub>}
              </td>
              <td className={`${dataCell} text-right`}>{row.value}</td>
              <td className={dataCell}>
                {row.unit}
                {row.exp && <sup className="text-[9px]">{row.exp}</sup>}
              </td>
              <td className={dataCell}>{row.note}</td>
              <td className="border-b border-[#a0a0a0]" />
            </tr>
          ))}
        </tbody>
      </table>
      <div className="flex w-[17px] shrink-0 flex-col bg-[#f0f0f0] text-[#505050]">
        <ChevronUp className="mx-auto h-[17px] w-3" strokeWidth={4} />
        <div className="h-[156px] w-[15px] bg-[#cdcdcd]" />
        <ChevronDown className="mx-auto mt-auto h-[17px] w-3" strokeWidth={4} />
      </div>
    </div>
  );
}

function TableDock() {
  return (
    <section className="shrink-0">
      <header className="flex h-[19px] items-center bg-[#b9c0ca] pr-1 pl-1 text-[#4a4a4a]">
        <h2 className="flex-1">5.6 Effective Widths of Stiffened Panels acc. to EN 1993-1-5</h2>
        <button aria-label="Pin table" className="mr-1">
          <Pin className="h-[11px] w-[11px]" strokeWidth={2} />
        </button>
        <button aria-label="Close table">
          <X className="h-3 w-3" />
        </button>
      </header>
      <div className="flex h-[25px] items-center bg-linear-to-b from-[#e9edf5] to-[#d0d5df] pl-2">
        <Tools items={tableBar} comboClass="w-[134px]" />
      </div>
      <div className="bg-[#f0f0f0] pb-[19px] font-['Liberation_Sans',Arial,sans-serif]">
        <ResultTable />
        <div className="mt-1 flex border-t border-[#666] text-[11px] leading-[15px] text-black">
          {sheetTabs.map((tab, i) => (
            <button
              key={tab}
              className={
                i === 3
                  ? "-mt-px rounded-b-[3px] border-r border-b border-[#666] bg-[#f4f4f4] px-0.5 pb-px"
                  : "rounded-b-[3px] border-r border-b border-[#666] bg-[#e1e1e1] px-0.5"
              }>
              {tab}
            </button>
          ))}
        </div>
      </div>
    </section>
  );
}

/* ---------- status bar ---------- */

const modes = ["SNAP", "GRID", "CARTES", "OSNAP", "GLINES", "DXF"];

function StatusBar() {
  return (
    <footer className="flex h-[21px] shrink-0 items-center border-t border-[#9a9fab] bg-linear-to-b from-[#e4e7ed] via-[#a9afbb] to-[#bcc1ca] pr-2 pl-1 text-[#222]">
      <span className="flex-1">Grid Point</span>
      <div className="mr-[81px] flex h-full gap-0.5 pb-0.5">
        {modes.map((mode) => (
          <button
            key={mode}
            className={
              mode === "GRID"
                ? "border border-t-white border-r-[#888] border-b-[#888] border-l-white px-[3px] leading-[15px]"
                : "border border-t-black border-r-white border-b-white border-l-black px-[3px] pt-px leading-[15px]"
            }>
            {mode}
          </button>
        ))}
      </div>
      <span className="border-r border-[#8c919c]">CS: Global YZ</span>
      <span className="border-r border-[#8c919c] px-0.5 whitespace-pre">Y:  1720.0 mm</span>
      <span className="pl-0.5 whitespace-pre">Z:  160.0 mm</span>
    </footer>
  );
}

export default function App() {
  return (
    <div className="flex h-screen flex-col overflow-hidden bg-[#cfd3dc] font-['Open_Sans','Noto_Sans',sans-serif] text-[11px] text-[#3a3a3a]">
      <header className="flex h-[23px] shrink-0 items-center bg-[#0078d7] pr-0.5 pl-[3px] text-white">
        <Icon name="app" />
        <h1 className="ml-1 flex-1 text-[12px]">SHAPE-THIN 8.15.01 x64 - [Buckling field, LC1]</h1>
        <button aria-label="Minimize" className="flex w-[46px] justify-center">
          <span className="h-px w-[10px] bg-white" />
        </button>
        <button aria-label="Restore" className="flex w-[46px] justify-center">
          <svg viewBox="0 0 11 11" className="h-[11px] w-[11px]" fill="none" stroke="white">
            <path d="M.5 3.500h7v7h-7zM2.500 3V.5h8v8H8" />
          </svg>
        </button>
        <button aria-label="Close" className="flex w-[46px] justify-center">
          <X className="h-[14px] w-[14px]" strokeWidth={1.5} />
        </button>
      </header>

      <div className="flex h-6 shrink-0 items-center pl-[3px]">
        <span className="mr-1 h-4 border-l-2 border-dotted border-[#a2a7b3]" />
        <Icon name="bridge" />
        <nav className="ml-1 flex flex-1 gap-px">
          {menus.map((menu) => (
            <button key={menu} className="px-[7px]">
              <span className="underline underline-offset-2">{menu[0]}</span>
              {menu.slice(1)}
            </button>
          ))}
        </nav>
        <button aria-label="Minimize document" className="mt-2 mr-2 h-0.5 w-1.5 bg-[#666]" />
        <button aria-label="Restore document" className="mr-2 h-[7px] w-2 border border-t-2 border-[#666]" />
        <button aria-label="Close document" className="mr-1 text-[#777]">
          <X className="h-[11px] w-[11px]" strokeWidth={3} />
        </button>
      </div>

      <div className="flex shrink-0">
        <Toolbar items={fileBar} />
        <Toolbar items={gridBar} />
      </div>
      <div className="flex shrink-0">
        <Toolbar items={insertBar} />
        <Toolbar items={zoomBar} />
        <Toolbar items={resultBar} />
      </div>

      <div className="flex min-h-0 flex-1">
        <Navigator />
        <main className="mr-px ml-[5px] flex min-w-0 flex-1 flex-col">
          <div className="relative mb-[7px] min-h-0 flex-1 border-t-2 border-l border-[#6a6a6a] border-b border-b-white bg-white font-['Liberation_Sans',Arial,sans-serif]">
            <StressDrawing />
            <p className="absolute top-1 left-1 leading-[14px] text-black">
              Stresses sigma-eqv [N/mm^2]
              <br />
              LC1 : Eigengewicht
            </p>
            <p className="absolute bottom-1 left-1 leading-[14px] text-black">
              Max sigma-eqv: 874.1, Min sigma-eqv: 364.5 N/mm^2
            </p>
            <div className="font-['Open_Sans','Noto_Sans',sans-serif]">
              <StressPanel />
            </div>
          </div>
          <TableDock />
        </main>
      </div>
      <StatusBar />
    </div>
  );
}
